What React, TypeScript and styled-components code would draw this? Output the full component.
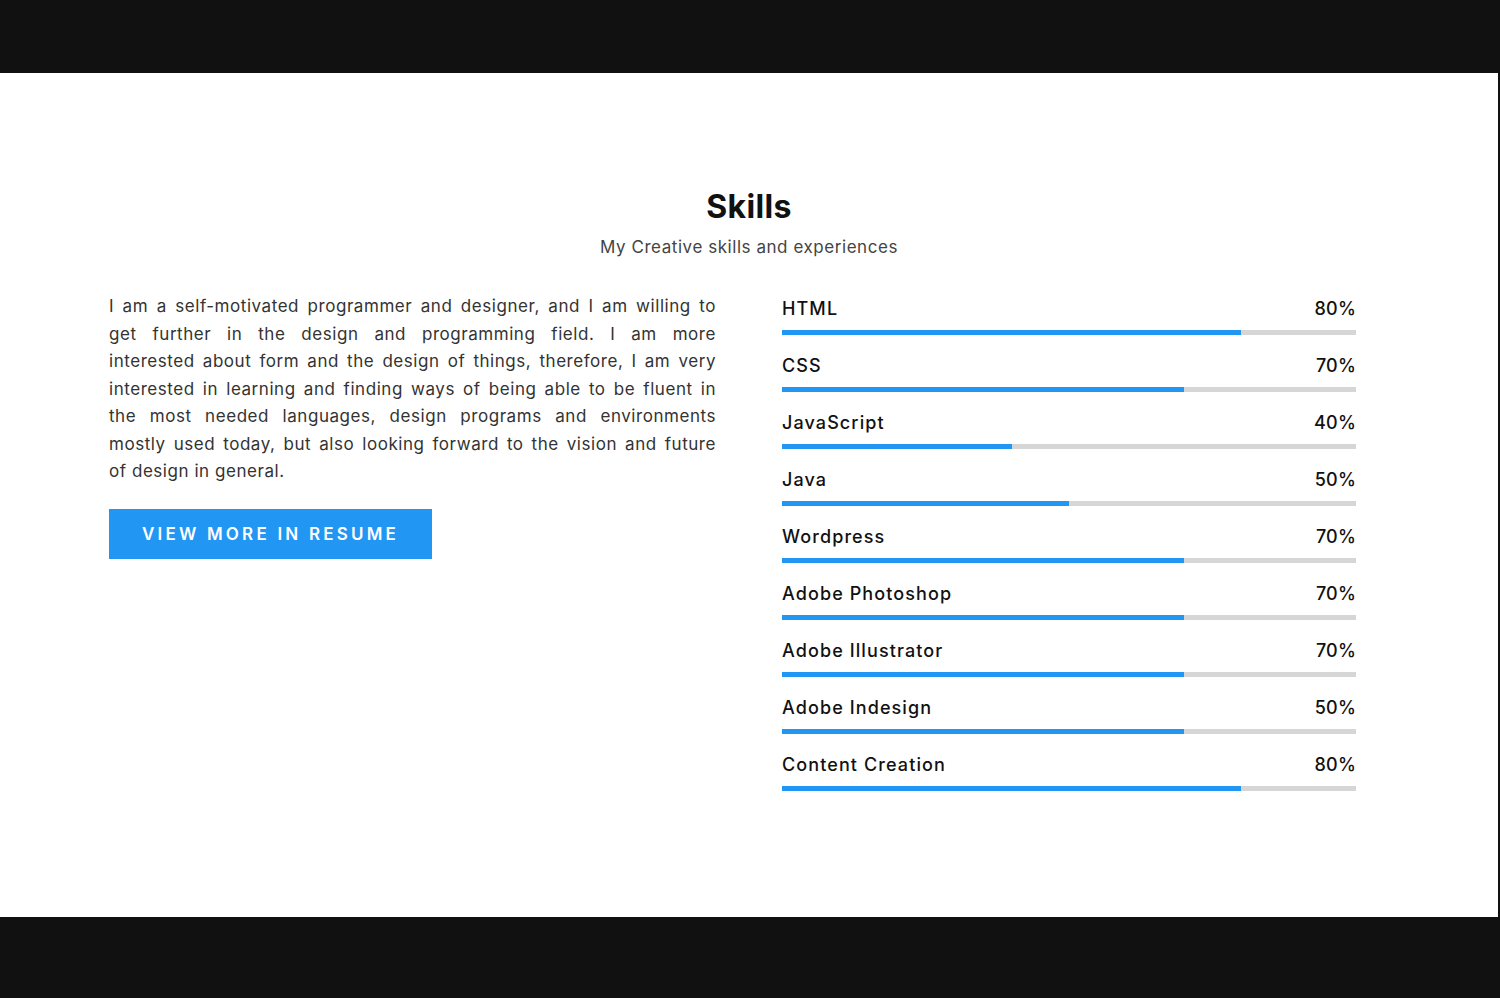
import React from "react";
import styled, { createGlobalStyle } from "styled-components";

const Global = createGlobalStyle`
  html, body { margin: 0; padding: 0; background: #111111; }
  body { font-family: "Inter", "Open Sans", sans-serif; }
  * { box-sizing: border-box; }
`;

const Page = styled.div`
  width: 1500px;
  height: 998px;
  display: flex;
  flex-direction: column;
  background: #111111;
`;

const TopBar = styled.div`
  height: 73px;
  flex: none;
`;

const Section = styled.section`
  height: 844px;
  width: 1498px;
  background: #ffffff;
  padding-top: 114px;
  display: flex;
  flex-direction: column;
`;

const Heading = styled.h2`
  margin: 0;
  text-align: center;
  font-size: 32px;
  line-height: 40px;
  font-weight: 700;
  color: #111111;
  letter-spacing: 0.3px;
`;

const Sub = styled.p`
  margin: 8px 0 0;
  text-align: center;
  font-size: 17px;
  line-height: 24px;
  color: #444444;
  letter-spacing: 0.55px;
`;

const Columns = styled.div`
  margin-top: 34px;
  margin-left: 109px;
  display: grid;
  grid-template-columns: 607px 574px;
  column-gap: 66px;
  align-items: start;
`;

const Left = styled.div`
  display: flex;
  flex-direction: column;
  align-items: flex-start;
`;

const Para = styled.p`
  margin: 0;
  width: 100%;
  font-size: 17px;
  line-height: 27.5px;
  color: #333333;
  letter-spacing: 0.55px;
`;

const Line = styled.span<{ $last?: boolean }>`
  display: block;
  text-align: justify;
  text-align-last: ${(p) => (p.$last ? "left" : "justify")};
`;

const Button = styled.a`
  margin-top: 23px;
  width: 323px;
  height: 50px;
  display: flex;
  align-items: center;
  justify-content: center;
  background: #2196f3;
  color: #ffffff;
  font-size: 17px;
  font-weight: 600;
  letter-spacing: 3.2px;
  text-transform: uppercase;
  text-decoration: none;
`;

const Skills = styled.div`
  padding-top: 3px;
  display: flex;
  flex-direction: column;
  gap: 18px;
`;

const Skill = styled.div`
  display: flex;
  flex-direction: column;
  gap: 8px;
`;

const Label = styled.div`
  display: flex;
  justify-content: space-between;
  font-size: 18px;
  line-height: 26px;
  font-weight: 500;
  color: #111111;
`;

const Name = styled.span`
  letter-spacing: 1.1px;
`;

const Percent = styled.span`
  letter-spacing: 0.2px;
`;

const Track = styled.div`
  height: 5px;
  background: #d6d6d6;
`;

const Fill = styled.div`
  height: 100%;
  background: #2196f3;
`;

const BottomBar = styled.div`
  flex: 1;
`;

const paragraph = [
  "I am a self-motivated programmer and designer, and I am willing to",
  "get further in the design and programming field. I am more",
  "interested about form and the design of things, therefore, I am very",
  "interested in learning and finding ways of being able to be fluent in",
  "the most needed languages, design programs and environments",
  "mostly used today, but also looking forward to the vision and future",
  "of design in general.",
];

const skills: { name: string; label: string; bar: number }[] = [
  { name: "HTML", label: "80%", bar: 80 },
  { name: "CSS", label: "70%", bar: 70 },
  { name: "JavaScript", label: "40%", bar: 40 },
  { name: "Java", label: "50%", bar: 50 },
  { name: "Wordpress", label: "70%", bar: 70 },
  { name: "Adobe Photoshop", label: "70%", bar: 70 },
  { name: "Adobe Illustrator", label: "70%", bar: 70 },
  { name: "Adobe Indesign", label: "50%", bar: 70 },
  { name: "Content Creation", label: "80%", bar: 80 },
];

export default function App() {
  return (
    <>
      <Global />
      <Page>
        <TopBar />
        <Section>
          <Heading>Skills</Heading>
          <Sub>My Creative skills and experiences</Sub>
          <Columns>
            <Left>
              <Para>
                {paragraph.map((l, i) => (
                  <Line key={i} $last={i === paragraph.length - 1}>
                    {l}
                  </Line>
                ))}
              </Para>
              <Button href="#">View More in Resume</Button>
            </Left>
            <Skills>
              {skills.map((s) => (
                <Skill key={s.name}>
                  <Label>
                    <Name>{s.name}</Name>
                    <Percent>{s.label}</Percent>
                  </Label>
                  <Track>
                    <Fill style={{ width: `${s.bar}%` }} />
                  </Track>
                </Skill>
              ))}
            </Skills>
          </Columns>
        </Section>
        <BottomBar />
      </Page>
    </>
  );
}
